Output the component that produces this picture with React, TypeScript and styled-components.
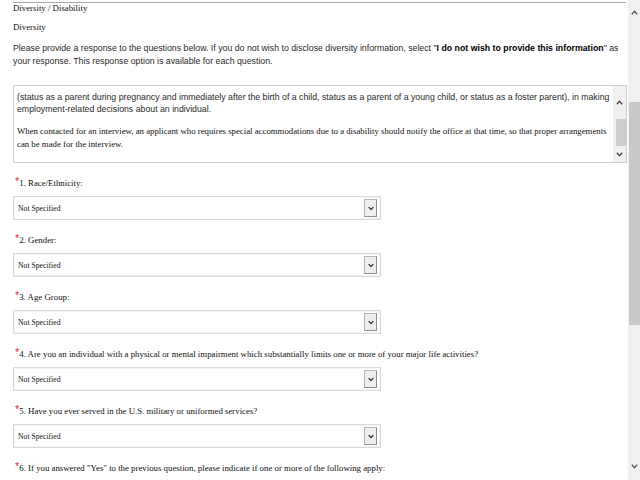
import styled, { createGlobalStyle } from "styled-components";

const GlobalStyle = createGlobalStyle`
  html, body {
    margin: 0;
    padding: 0;
    background: #fff;
    overflow: hidden;
  }
`;

const Page = styled.div`
  display: flex;
  width: 640px;
  height: 480px;
  overflow: hidden;
`;

const Main = styled.div`
  flex: 1;
  padding: 2px 2px 0 13px;
  overflow: hidden;
`;

const SectionHead = styled.div`
  border-top: 1px solid #a9a9a9;
  font-family: "Liberation Serif", serif;
  font-size: 8.8px;
  line-height: 11px;
  color: #111;
`;

const SubHead = styled.div`
  margin-top: 8px;
  font-family: "Liberation Serif", serif;
  font-size: 8.8px;
  line-height: 11px;
  color: #111;
`;

const Intro = styled.p`
  margin: 8.5px 0 0;
  font-family: "Liberation Sans", Arial, sans-serif;
  font-size: 8.78px;
  line-height: 13px;
  color: #2a2a2a;
  white-space: nowrap;
  b {
    color: #000;
  }
`;

const NoticeBox = styled.div`
  margin-top: 17.5px;
  width: 614px;
  height: 78px;
  box-sizing: border-box;
  border: 1px solid #cfcfcf;
  display: flex;
`;

const NoticeText = styled.div`
  flex: 1;
  padding: 5px 0 0 3px;
  overflow: hidden;
  white-space: nowrap;
`;

const SansLine = styled.div`
  font-family: "Liberation Sans", Arial, sans-serif;
  font-size: 8.75px;
  line-height: 12px;
  color: #2a2a2a;
`;

const SerifPara = styled.div`
  margin-top: 9.5px;
  font-family: "Liberation Serif", serif;
  font-size: 8.78px;
  line-height: 13.5px;
  color: #111;
`;

const BoxScroll = styled.div`
  width: 13px;
  background: #f0f0f0;
  display: flex;
  flex-direction: column;
  align-items: center;
`;

const BoxArrow = styled.div<{ $h: number }>`
  height: ${(p) => p.$h}px;
  width: 100%;
  display: flex;
  align-items: center;
  justify-content: center;
`;

const BoxThumb = styled.div`
  width: 10px;
  height: 27px;
  margin-left: 2px;
  background: #cdcdcd;
`;

const Question = styled.div`
  padding-top: 13px;
`;

const Label = styled.div`
  padding-left: 2px;
  font-family: "Liberation Serif", serif;
  font-size: 8.8px;
  line-height: 14px;
  color: #111;
  white-space: nowrap;
`;

const Req = styled.span`
  color: #e8262a;
  font-family: "Liberation Sans", Arial, sans-serif;
  font-size: 11px;
  vertical-align: 1px;
  line-height: 0;
`;

const SelectBox = styled.div`
  margin-top: 6px;
  width: 368px;
  height: 24px;
  box-sizing: border-box;
  border: 1px solid #dadada;
  box-shadow: inset 0 0 0 1px #f4f4f4;
  display: flex;
  align-items: center;
  justify-content: space-between;
  padding: 0 3px 0 4px;
  font-family: "Liberation Serif", serif;
  font-size: 7.7px;
  color: #111;
`;

const DropButton = styled.div`
  width: 13px;
  height: 18px;
  box-sizing: border-box;
  border: 1px solid #b4b4b4;
  border-right-color: #8c8c8c;
  border-bottom-color: #8c8c8c;
  background: #eeeeee;
  display: flex;
  align-items: center;
  justify-content: center;
`;

const PageScroll = styled.div`
  width: 12px;
  background: #f0f0f0;
  display: flex;
  flex-direction: column;
`;

const ScrollArrow = styled.div<{ $h: number }>`
  height: ${(p) => p.$h}px;
  display: flex;
  align-items: center;
  justify-content: center;
`;

const ScrollGap = styled.div<{ $h?: number }>`
  ${(p) => (p.$h ? `height: ${p.$h}px;` : "flex: 1;")}
`;

const ScrollThumb = styled.div`
  height: 223px;
  margin-left: 1px;
  background: #c8c8c8;
`;

function Chevron({ up, color = "#555", w = 7 }: { up?: boolean; color?: string; w?: number }) {
  return (
    <svg width={w} height={5} viewBox="0 0 7 5">
      <path
        d={up ? "M0.8 4.2 L3.5 1.3 L6.2 4.2" : "M0.8 0.8 L3.5 3.7 L6.2 0.8"}
        fill="none"
        stroke={color}
        strokeWidth={1.3}
      />
    </svg>
  );
}

const questions = [
  "1. Race/Ethnicity:",
  "2. Gender:",
  "3. Age Group:",
  "4.  Are you an individual with a physical or mental impairment which substantially limits one or more of your major life activities?",
  "5. Have you ever served in the U.S. military or uniformed services?",
  '6. If you answered "Yes" to the previous question, please indicate if one or more of the following apply:',
];

export default function App() {
  return (
    <>
      <GlobalStyle />
      <Page>
        <Main>
          <SectionHead>Diversity / Disability</SectionHead>
          <SubHead>Diversity</SubHead>
          <Intro>
            Please provide a response to the questions below. If you do not wish to disclose diversity information, select "
            <b>I do not wish to provide this information</b>" as
            <br />
            your response. This response option is available for each question.
          </Intro>
          <NoticeBox>
            <NoticeText>
              <SansLine>
                (status as a parent during pregnancy and immediately after the birth of a child, status as a parent of a young child, or status as a foster parent), in making
              </SansLine>
              <SansLine>employment-related decisions about an individual.</SansLine>
              <SerifPara>
                When contacted for an interview, an applicant who requires special accommodations due to a disability should notify the office at that time, so that proper arrangements
                <br />
                can be made for the interview.
              </SerifPara>
            </NoticeText>
            <BoxScroll>
              <BoxArrow $h={33}>
                <Chevron up color="#444" />
              </BoxArrow>
              <BoxThumb />
              <BoxArrow $h={16}>
                <Chevron color="#444" />
              </BoxArrow>
            </BoxScroll>
          </NoticeBox>
          {questions.map((q, i) => (
            <Question key={i}>
              <Label>
                <Req>*</Req>
                {q}
              </Label>
              {i < 5 && (
                <SelectBox>
                  <span>Not Specified</span>
                  <DropButton>
                    <Chevron color="#111" w={6} />
                  </DropButton>
                </SelectBox>
              )}
            </Question>
          ))}
        </Main>
        <PageScroll>
          <ScrollArrow $h={24}>
            <Chevron up />
          </ScrollArrow>
          <ScrollGap $h={78} />
          <ScrollThumb />
          <ScrollGap />
          <ScrollArrow $h={28}>
            <Chevron />
          </ScrollArrow>
        </PageScroll>
      </Page>
    </>
  );
}
